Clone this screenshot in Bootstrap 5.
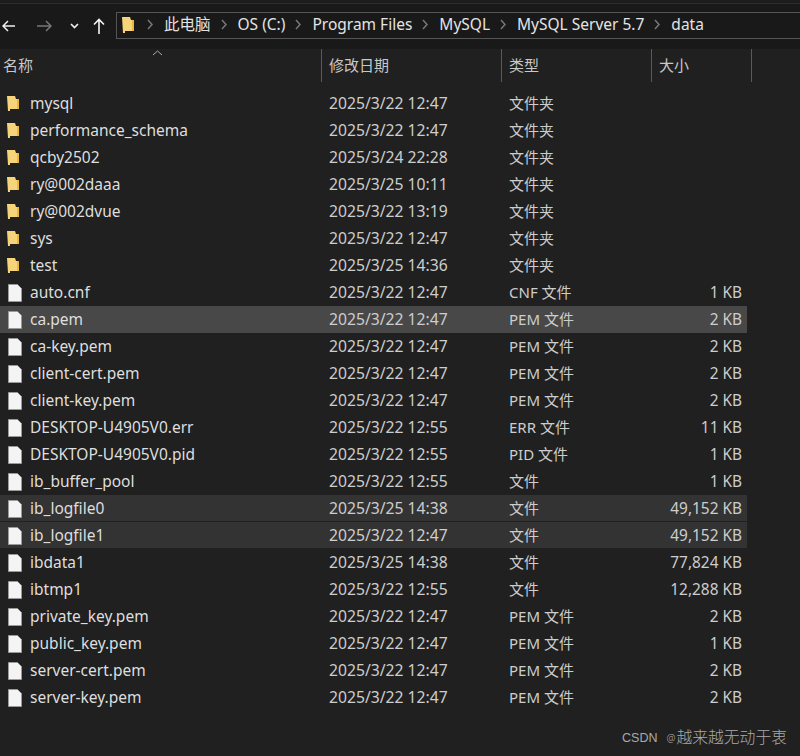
<!DOCTYPE html>
<html lang="zh">
<head>
<meta charset="utf-8">
<title>data</title>
<link href="https://cdn.jsdelivr.net/npm/bootstrap@5.3.0/dist/css/bootstrap.min.css" rel="stylesheet">
<style>
html,body{height:756px;overflow:hidden;background:#202020;}
body{font-family:"Noto Sans","Noto Sans CJK SC",sans-serif;font-size:15px;color:#dcdcdc;position:relative;width:800px;}
.topstrip{height:4px;background:#1c1c1c;border-bottom:1px solid #2b2b2b;}
.toolband{height:45px;background:#191919;padding-top:8px;}
.navbtn{display:flex;align-items:center;justify-content:center;height:27px;}
.nb1{width:16px;} .nb2{width:46px;margin-left:5px;} .nb3{width:15px;} .nb4{width:34px;}
.addr{flex:1;height:27px;border:1px solid #555;border-right:0;background:#191919;padding-left:5px;padding-bottom:2px;color:#e4e4e4;white-space:nowrap;font-size:15.5px;}
.chev{margin:0 10px;flex:none;}
.chev0{margin:0 10px 0 12px;flex:none;}
.colhead{height:33px;background:#202020;position:relative;margin-bottom:8px;}
.hcell{height:33px;display:flex;align-items:center;color:#c8c8c8;border-right:1px solid #5a5a5a;font-size:15px;flex:none;padding-bottom:1px;padding-left:7px;}
.hc1{width:322px;padding-left:3px;} .hc2{width:180px;} .hc3{width:150px;} .hc4{width:100px;}
.sortmark{position:absolute;left:152px;top:1px;}
.frow{height:27px;width:747px;display:flex;align-items:center;color:#dedede;}
.frow.hi{background:#484848;}
.frow.hi2{background:#333;box-shadow:inset 0 -1px 0 #202020;}
.cname{width:329px;display:flex;align-items:center;flex:none;padding-left:7px;font-size:15.5px;}
.cname .fico{margin-right:10px;flex:none;}
.cname .dico{margin-left:1px;margin-right:8px;flex:none;}
.cdate{width:180px;flex:none;color:#cdcdcd;font-size:15.7px;}
.ctype{width:100px;flex:none;color:#cdcdcd;}
.csize{flex:1;text-align:right;padding-right:5px;color:#cdcdcd;font-size:15.4px;}
.wm{position:absolute;right:13px;bottom:6px;font-size:15.8px;color:#aaa;font-weight:300;display:flex;align-items:center;}
.wm .wmc{font-family:"Liberation Sans",sans-serif;font-size:12.5px;margin-right:9px;letter-spacing:0;}
.wm .wma{font-size:10px;margin-right:1px;}
</style>
</head>
<body>
<div class="topstrip"></div>
<div class="toolband d-flex">
  <div class="navbtn nb1"><svg width="13" height="12" viewBox="0 0 13 12"><path d="M13 6H1M6 1L1 6l5 5" fill="none" stroke="#f0f0f0" stroke-width="1.500"/></svg></div>
  <div class="navbtn nb2"><svg width="15" height="12" viewBox="0 0 15 12"><path d="M0 6h14M9 1l5 5-5 5" fill="none" stroke="#777" stroke-width="1.500"/></svg></div>
  <div class="navbtn nb3"><svg width="9" height="6" viewBox="0 0 9 6"><path d="M1 1l3.500 3.500L8 1" fill="none" stroke="#eee" stroke-width="1.700"/></svg></div>
  <div class="navbtn nb4"><svg width="12" height="16" viewBox="0 0 12 16"><path d="M6 16V1.500M1 6.500l5-5 5 5" fill="none" stroke="#f4f4f4" stroke-width="1.600"/></svg></div>
  <div class="addr d-flex align-items-center">
    <svg width="13" height="18" viewBox="0 0 13 18"><path d="M0 1h8l1 3h3v11H3v2H1z" fill="#f5d47a"/><path d="M10 4h2v11h-2z" fill="#eab63e"/></svg>
    <svg class="chev0" width="7" height="11" viewBox="0 0 7 11"><path d="M1 1l4 4.500-4 4.500" fill="none" stroke="#777" stroke-width="1.500"/></svg>
    <span>此电脑</span>
    <svg class="chev" width="7" height="11" viewBox="0 0 7 11"><path d="M1 1l4 4.500-4 4.500" fill="none" stroke="#777" stroke-width="1.500"/></svg>
    <span>OS (C:)</span>
    <svg class="chev" width="7" height="11" viewBox="0 0 7 11"><path d="M1 1l4 4.500-4 4.500" fill="none" stroke="#777" stroke-width="1.500"/></svg>
    <span>Program Files</span>
    <svg class="chev" width="7" height="11" viewBox="0 0 7 11"><path d="M1 1l4 4.500-4 4.500" fill="none" stroke="#777" stroke-width="1.500"/></svg>
    <span>MySQL</span>
    <svg class="chev" width="7" height="11" viewBox="0 0 7 11"><path d="M1 1l4 4.500-4 4.500" fill="none" stroke="#777" stroke-width="1.500"/></svg>
    <span>MySQL Server 5.7</span>
    <svg class="chev" width="7" height="11" viewBox="0 0 7 11"><path d="M1 1l4 4.500-4 4.500" fill="none" stroke="#777" stroke-width="1.500"/></svg>
    <span>data</span>
  </div>
</div>
<div class="colhead d-flex">
  <div class="hcell hc1">名称</div>
  <div class="hcell hc2">修改日期</div>
  <div class="hcell hc3">类型</div>
  <div class="hcell hc4">大小</div>
  <svg class="sortmark" width="11" height="6" viewBox="0 0 11 6"><path d="M1 5l4.500-4 4.500 4" fill="none" stroke="#aaa"/></svg>
</div>
<div id="rows"></div>
<div class="wm"><span class="wmc">CSDN</span><span class="wma">@</span><span>越来越无动于衷</span></div>
<script>
var F='<svg class="fico" width="13" height="17" viewBox="0 0 13 17"><path d="M0 1h8l1 3h3v10H3v2H1z" fill="#f5d47a"/><path d="M10 4h2v10h-2z" fill="#eab63e"/></svg>';
var D='<svg class="dico" width="14" height="18" viewBox="0 0 14 18"><path d="M.5.500h9l4 4v13H.500z" fill="#f4f4f4" stroke="#9a9a9a"/></svg>';
var rows=[
["mysql","2025/3/22 12:47","文件夹","",0],
["performance_schema","2025/3/22 12:47","文件夹","",0],
["qcby2502","2025/3/24 22:28","文件夹","",0],
["ry@002daaa","2025/3/25 10:11","文件夹","",0],
["ry@002dvue","2025/3/22 13:19","文件夹","",0],
["sys","2025/3/22 12:47","文件夹","",0],
["test","2025/3/25 14:36","文件夹","",0],
["auto.cnf","2025/3/22 12:47","CNF 文件","1 KB",1],
["ca.pem","2025/3/22 12:47","PEM 文件","2 KB",2],
["ca-key.pem","2025/3/22 12:47","PEM 文件","2 KB",1],
["client-cert.pem","2025/3/22 12:47","PEM 文件","2 KB",1],
["client-key.pem","2025/3/22 12:47","PEM 文件","2 KB",1],
["DESKTOP-U4905V0.err","2025/3/22 12:55","ERR 文件","11 KB",1],
["DESKTOP-U4905V0.pid","2025/3/22 12:55","PID 文件","1 KB",1],
["ib_buffer_pool","2025/3/22 12:55","文件","1 KB",1],
["ib_logfile0","2025/3/25 14:38","文件","49,152 KB",3],
["ib_logfile1","2025/3/22 12:47","文件","49,152 KB",3],
["ibdata1","2025/3/25 14:38","文件","77,824 KB",1],
["ibtmp1","2025/3/22 12:55","文件","12,288 KB",1],
["private_key.pem","2025/3/22 12:47","PEM 文件","2 KB",1],
["public_key.pem","2025/3/22 12:47","PEM 文件","1 KB",1],
["server-cert.pem","2025/3/22 12:47","PEM 文件","2 KB",1],
["server-key.pem","2025/3/22 12:47","PEM 文件","2 KB",1]];
document.getElementById('rows').innerHTML=rows.map(function(r){
 var c=r[4]==2?' hi':r[4]==3?' hi2':'';
 return '<div class="frow'+c+'"><div class="cname">'+(r[4]==0?F:D)+'<span>'+r[0]+'</span></div><div class="cdate">'+r[1]+'</div><div class="ctype">'+r[2]+'</div><div class="csize">'+r[3]+'</div></div>';
}).join('');
</script>
<script src="https://cdn.jsdelivr.net/npm/bootstrap@5.3.0/dist/js/bootstrap.bundle.min.js"></script>
</body>
</html>
